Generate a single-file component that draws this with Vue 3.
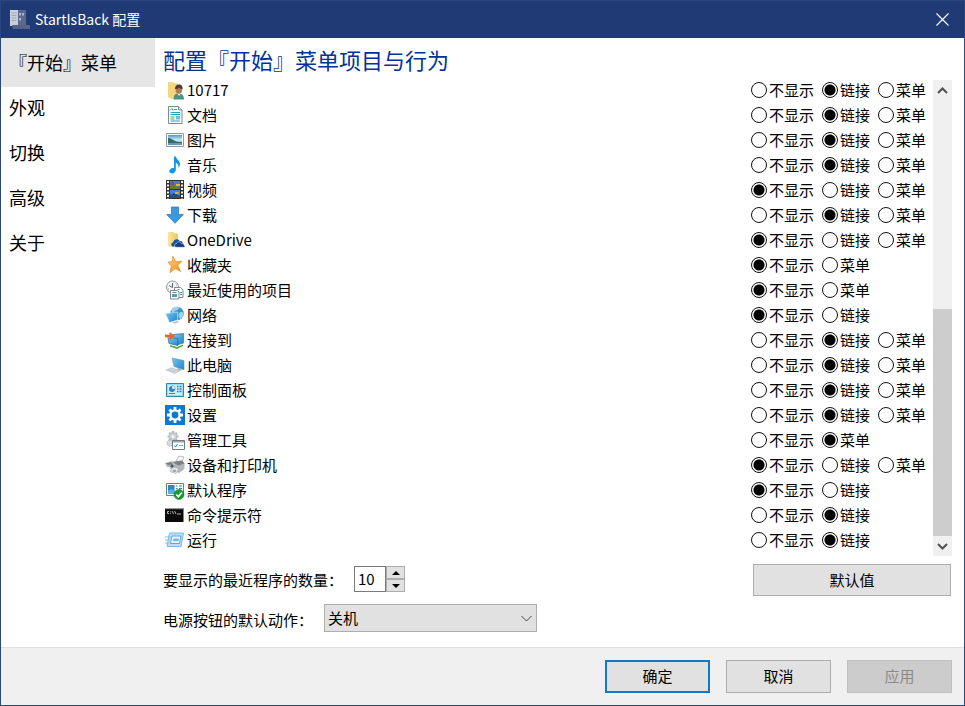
<template>
  <div class="window">
    <svg class="sprite" width="0" height="0" aria-hidden="true">
      <defs>
        <linearGradient id="g-folder" x1="0" y1="0" x2="1" y2="0">
          <stop offset="0" stop-color="#fbe69a" />
          <stop offset="1" stop-color="#edc860" />
        </linearGradient>
        <linearGradient id="g-screen" x1="0" y1="0" x2="1" y2="1">
          <stop offset="0" stop-color="#7cc6ef" />
          <stop offset="1" stop-color="#1c83cb" />
        </linearGradient>
        <linearGradient id="g-star" x1="0" y1="0" x2="1" y2="1">
          <stop offset="0" stop-color="#ffd27a" />
          <stop offset="1" stop-color="#ee8a1d" />
        </linearGradient>
        <linearGradient id="g-photo" x1="0" y1="0" x2="0" y2="1">
          <stop offset="0" stop-color="#4d9ad2" />
          <stop offset="0.5" stop-color="#d3ebf6" />
          <stop offset="1" stop-color="#3c7ca8" />
        </linearGradient>
      </defs>
      <symbol id="user" viewBox="0 0 20 20">
        <path d="M3 2h5l2 1.500h3V17l-6 2-4-2z" fill="url(#g-folder)" />
        <path d="M3 2l4 3v14l-4-2z" fill="#f3d680" />
        <path d="M8.500 19.500c0-4 1.500-6 5-6s5.500 2 5.500 6z" fill="#4b9480" />
        <path d="M12 13l2 3 2.500-3z" fill="#e8e4d8" />
        <ellipse cx="13.800" cy="9.800" rx="3.200" ry="4" fill="#b07a52" />
        <path d="M10 9c0-3 1.500-4.500 4-4.500S18 6 17.500 9.500C16 9 15 8.500 14.500 7.500 13 8.500 12 9 10 9z" fill="#4a3b32" />
      </symbol>
      <symbol id="doc" viewBox="0 0 20 20">
        <path d="M3.500 1.500h10l3.500 3.500v13.500h-13.500z" fill="#fff" stroke="#7d8a92" />
        <path d="M13.500 1.500v3.500h3.500" fill="#dfe6ea" stroke="#7d8a92" />
        <path d="M5 5.500l2-2 1 2M9 4.500h3M5.500 7.500h9.500M5.500 9.500h9.500M5.500 12h4M5.500 14h4M5.500 16h9.500" stroke="#2ba0ba" fill="none" />
        <path d="M11 11h4v3.500h-4z" fill="#6fbfd0" />
      </symbol>
      <symbol id="pic" viewBox="0 0 20 20">
        <path d="M1.500 3.500h17v13h-17z" fill="#fff" stroke="#8d9aa3" />
        <path d="M3 5h14v10H3z" fill="url(#g-photo)" />
        <path d="M3 8c3 0 5 2 8 3.500 2 .6 4 .6 6 .6V13H3z" fill="#356b62" />
        <path d="M3 13h14v2H3z" fill="#5b9cc4" />
      </symbol>
      <symbol id="music" viewBox="0 0 20 20">
        <path d="M9 1.500h1.800c.4 2.800 4.200 4 4.200 7.500 0 1.500-.6 2.800-1.500 3.800.3-2.500-.6-4.300-2.700-5.100V15c0 2-1.700 3.400-3.800 3.400-1.700 0-2.700-1-2.700-2.300 0-1.700 1.700-3.100 3.700-3.100.4 0 .7 0 1 .1z" fill="#1597e0" />
      </symbol>
      <symbol id="video" viewBox="0 0 20 20">
        <path d="M1 0h18v19H1z" fill="#35312f" />
        <path d="M5 1h10v8H5z" fill="#4c79c8" />
        <path d="M5 10h10v8H5z" fill="#4083d6" />
        <path d="M5 6l4-2 2 3 4-3v5H5z" fill="#687c2c" />
        <path d="M6 2h3v3H6z" fill="#b13c46" />
        <path d="M11 4h4v2h-4z" fill="#e8b832" />
        <path d="M5 15l4-2 6 3v2H5z" fill="#274f86" />
        <path d="M10 12h4v2h-4z" fill="#dcaa38" />
        <path d="M3 1v18M17 1v18" stroke="#f3f3f3" stroke-width="2" stroke-dasharray="2 1.500" />
      </symbol>
      <symbol id="down" viewBox="0 0 20 20">
        <path d="M6.500 2h7v7.500h4.800L10 18.300 1.700 9.500h4.800z" fill="#3c98e0" stroke="#2b7fc6" stroke-width=".8" />
      </symbol>
      <symbol id="onedrive" viewBox="0 0 20 20">
        <path d="M3 2h5l2 1.500h3V17H6l-3-1z" fill="url(#g-folder)" />
        <path d="M8 16.500c-2 0-2.500-3.500 0-4 .5-3.300 5-4.500 6.800-1.500 2.700-.4 3.200 2 2.900 2.700 2 .6 1.500 2.800 0 2.800z" fill="#1a56a0" />
        <path d="M11 17.300c-2-.4-2-3.200.3-3.500.9-2.500 4.300-2.700 5.200-.2 2.400-.2 2.700 1 2.600 1.600 1.500.7.900 2.100-.4 2.100z" fill="#123f82" stroke="#fff" stroke-width=".5" />
      </symbol>
      <symbol id="star" viewBox="0 0 20 20">
        <path d="M7.800 1.300l3.200 5.400 6-.5-4.200 4.100 2.700 6.200-5.200-3-5.300 4.200 1.300-6.500L3 7l4.500-.4z" fill="url(#g-star)" stroke="#dd8a2b" stroke-width=".7" />
      </symbol>
      <symbol id="recent" viewBox="0 0 20 20">
        <circle cx="7.500" cy="7" r="6" fill="#f3f5f6" stroke="#8e979d" />
        <path d="M7.500 3v4.500L4 5.500" stroke="#59656d" fill="none" />
        <path d="M3 9h1M7 11v1M11 5h1" stroke="#8e979d" />
        <path d="M9.500 7.500h6l2.500 2.500v7.500H9.500z" fill="#fff" stroke="#7f898f" />
        <path d="M5.500 10.500h7l1.500 1.500v7H5.500z" fill="#fff" stroke="#7f898f" />
        <path d="M7.500 12.500h4M12.500 9.500h2M15 12.500h2M15 14.500h2" stroke="#74828b" />
        <path d="M7 14h5v3H7z" fill="#4d9cc6" />
      </symbol>
      <symbol id="net" viewBox="0 0 20 20">
        <circle cx="12" cy="8.500" r="6.800" fill="#3e93c8" />
        <path d="M6 6c2-4 6-5 9-3.500-2 1-2 3-4.500 3-1 2-3 1.500-4.500.5zM14 8c2-1.500 3-1 4.500 0 0 3-1 4.500-3 6-2-1-2.500-4-1.500-6z" fill="#9fd2e8" />
        <path d="M.5 8.500l12-1.500v8l-8 2.500z" fill="url(#g-screen)" stroke="#d8f0fb" stroke-width=".6" />
        <path d="M7 17.500l6-1.500 1.500 1-5 1.800z" fill="#b2c4ce" />
      </symbol>
      <symbol id="connect" viewBox="0 0 20 20">
        <path d="M8 4.500l10.500-1v9.500l-7 2z" fill="url(#g-screen)" stroke="#35769f" stroke-width=".7" />
        <path d="M3 8l10 .3v7.200l-9-2z" fill="url(#g-screen)" stroke="#276a98" stroke-width=".7" />
        <path d="M5 15l7 2 6-2.500v1.500l-6 3-7-2.500z" fill="#4cad45" />
        <path d="M0 4.500l4.500.3V2L10 6l-5 4V7.800L0 7.300z" fill="#e5672d" />
      </symbol>
      <symbol id="pc" viewBox="0 0 20 20">
        <path d="M7 3l12 2.500v9.300L9 11.500z" fill="url(#g-screen)" stroke="#6b97b3" stroke-width=".6" />
        <path d="M12.500 13v2l4 .5v-1.500z" fill="#a4adb3" />
        <path d="M1 15l5-2.200 9 2.700-5 3z" fill="#d9dfe2" stroke="#adb7bd" stroke-width=".6" />
        <path d="M3.500 15l7 2M6 14l7 2" stroke="#a0abb2" stroke-width=".6" stroke-dasharray="1 .6" />
      </symbol>
      <symbol id="panel" viewBox="0 0 20 20">
        <path d="M1.500 3.500h17v13h-17z" fill="#9adcf5" stroke="#2b88b4" />
        <path d="M3 5h14v10H3z" fill="#cceffb" />
        <circle cx="7" cy="9" r="3" fill="#2e86c1" />
        <path d="M7 9V5.500A3.300 3.300 0 0 1 10.300 9z" fill="#f2f9fc" stroke="#3390c4" stroke-width=".5" />
        <path d="M12 6.500h1.500M14.500 6.500h2M12 9h1.500M14.500 9h2M12 11.500h1.500M14.500 11.500h2" stroke="#267cae" stroke-width="1.400" />
        <path d="M4 13.500h6" stroke="#2e86c1" />
      </symbol>
      <symbol id="gear" viewBox="0 0 20 20">
        <path d="M0 0h20v20H0z" fill="#0b79d0" />
        <path d="M10 2v16M2 10h16M4.400 4.400l11.200 11.200M15.600 4.400L4.400 15.600" stroke="#fff" stroke-width="2.800" />
        <circle cx="10" cy="10" r="5.800" fill="#fff" />
        <circle cx="10" cy="10" r="3.400" fill="#0b79d0" />
      </symbol>
      <symbol id="tools" viewBox="0 0 20 20">
        <path d="M8 1v11M2.500 6.500h11M4.200 2.700l7.700 7.700M11.900 2.700l-7.700 7.700" stroke="#b4babe" stroke-width="2.200" />
        <circle cx="8" cy="6.500" r="3.900" fill="#ced2d5" stroke="#a8afb3" stroke-width=".6" />
        <circle cx="8" cy="6.500" r="1.500" fill="#f5f6f7" />
        <circle cx="5" cy="13" r="3" fill="#d7dadc" stroke="#aab0b4" stroke-dasharray="1.500 .8" />
        <path d="M7.500 10.500h12v9h-12z" fill="#fff" stroke="#727b81" />
        <path d="M8 11h11v1.500H8z" fill="#9aa4aa" />
        <path d="M9.500 15.500l1 1.500 2-3" stroke="#278cc4" fill="none" />
        <path d="M14 15.500h1.500M16.500 15.500h1.500" stroke="#4b9bcd" />
      </symbol>
      <symbol id="printer" viewBox="0 0 20 20">
        <path d="M11 6l3-5 5 1-2 5z" fill="#f6f6f6" stroke="#a0a4a6" stroke-width=".7" />
        <path d="M7 7l10-1.500 2.500 3V14L14 18l-9-4z" fill="#b3b7b9" />
        <path d="M7 7l10-1.500 2.500 3-6 2z" fill="#7b8083" />
        <path d="M8 12l6 1.500-3 5-6-2z" fill="#e8edf0" stroke="#999ea1" stroke-width=".6" />
        <path d="M0 8l7-2 3 3.500-1 3.500-7-1z" fill="#b6babd" />
        <path d="M1 8.200l5-1 2 2-5 .8z" fill="#777c7f" />
        <circle cx="7" cy="11" r="1.600" fill="#4d5357" />
        <path d="M9 14.500l2.500.8-1.500 2-3-1z" fill="#69a8ca" />
      </symbol>
      <symbol id="defaults" viewBox="0 0 20 20">
        <path d="M1.500 3.500h17v12h-17z" fill="#fff" stroke="#6c7d88" />
        <path d="M3 5h6.500v9H3z" fill="#2688cc" />
        <path d="M3 11c2-2 4-2 6.500-1v4H3z" fill="#55b1e4" />
        <path d="M11 6h1.500M14 6h3M11 8.500h1.500M14 8.500h3" stroke="#2f7fb3" />
        <circle cx="14" cy="14.500" r="5" fill="#1c9a35" stroke="#137e28" stroke-width=".6" />
        <path d="M11.300 14.500l2 2.200 3.500-4.200" stroke="#fff" stroke-width="1.700" fill="none" />
      </symbol>
      <symbol id="cmd" viewBox="0 0 20 20">
        <path d="M0 3h18.500v14H0z" fill="#090909" />
        <path d="M0 3h18.500v1.200H0z" fill="#999" />
        <path d="M4 6.500H2.500v2H4M5.500 6.500v.8M5.500 8v.8M7 6l1.500 3M9.500 6l1.500 3M12 9h4" stroke="#ddd" stroke-width=".8" fill="none" />
      </symbol>
      <symbol id="run" viewBox="0 0 20 20">
        <path d="M4.500 3h14l-2.500 13.500H2z" fill="#b9e0f7" stroke="#7dbbe4" />
        <path d="M7 6h9l-1.500 7.500H5.500z" fill="#eaf7ff" stroke="#5fa6da" />
        <path d="M8.500 8.500h5.500l-.6 2.800H8z" fill="#74b9e8" />
        <path d="M0 7h5M0 10h4.500M0 13h4" stroke="#83bfe8" stroke-width="1.200" />
      </symbol>
    </svg>

    <header class="titlebar">
      <svg class="app-icon" viewBox="0 0 20 20" aria-hidden="true">
        <path d="M7 0h9v16H7z" fill="#59698f" />
        <path d="M0 0h8v16H0z" fill="#c9ced9" />
        <path d="M1.500 3h5M1.500 5.500h5M1.500 8h5M1.500 10.500h5" stroke="#a0a8ba" />
        <path d="M10 3v2.500M13 3v2.500M10 8v2.500" stroke="#a9b4cb" stroke-width="2" />
        <path d="M2 15h18v4H3z" fill="#566587" />
      </svg>
      <span class="caption">StartIsBack 配置</span>
      <button class="close" type="button" aria-label="关闭">
        <svg width="13" height="13" viewBox="0 0 13 13"><path d="M.5.500l12 12M12.500.500l-12 12" stroke="#fff" stroke-width="1.200" /></svg>
      </button>
    </header>

    <div class="body">
      <nav class="sidebar">
        <button
          v-for="(tab, i) in tabs"
          :key="tab"
          type="button"
          :class="['tab', { active: i === current }]"
          @click="current = i"
        >{{ tab }}</button>
      </nav>

      <main class="page">
        <h1>配置『开始』菜单项目与行为</h1>
        <div class="list">
          <div class="rows">
            <div v-for="item in items" :key="item.icon" class="row" role="radiogroup" :aria-label="item.name">
              <svg class="icon" aria-hidden="true"><use :href="'#' + item.icon" /></svg>
              <span class="name">{{ item.name }}</span>
              <div class="choices">
                <label v-for="opt in item.options" :key="opt">
                  <input v-model="item.value" type="radio" :name="item.icon" :value="opt">{{ opt }}
                </label>
              </div>
            </div>
          </div>
          <div class="scrollbar">
            <button type="button" aria-label="向上">
              <svg width="11" height="7" viewBox="0 0 11 7"><path d="M1 6l4.500-4.500L10 6" /></svg>
            </button>
            <div class="track"><div class="thumb"></div></div>
            <button type="button" aria-label="向下">
              <svg width="11" height="7" viewBox="0 0 11 7"><path d="M1 1l4.500 4.500L10 1" /></svg>
            </button>
          </div>
        </div>

        <div class="field count">
          <label for="recent-count">要显示的最近程序的数量：</label>
          <div class="spin">
            <input id="recent-count" v-model.number="count" type="number">
            <div class="spin-buttons">
              <button type="button" aria-label="增加" @click="count++">
                <svg width="8" height="4" viewBox="0 0 8 4"><path d="M0 4l4-4 4 4z" /></svg>
              </button>
              <button type="button" aria-label="减少" @click="count--">
                <svg width="8" height="4" viewBox="0 0 8 4"><path d="M0 0l4 4 4-4z" /></svg>
              </button>
            </div>
          </div>
          <button class="btn reset" type="button">默认值</button>
        </div>
        <div class="field power">
          <label for="power-action">电源按钮的默认动作：</label>
          <div class="select">
            <select id="power-action" v-model="power">
              <option>关机</option>
              <option>重启</option>
              <option>睡眠</option>
            </select>
            <svg width="11" height="7" viewBox="0 0 11 7"><path d="M.5 1l5 5 5-5" /></svg>
          </div>
        </div>
      </main>
    </div>

    <footer class="footer">
      <button class="btn primary" type="button">确定</button>
      <button class="btn" type="button">取消</button>
      <button class="btn" type="button" disabled>应用</button>
    </footer>
  </div>
</template>

<script setup>
import { ref, reactive } from 'vue';

const tabs = ['『开始』菜单', '外观', '切换', '高级', '关于'];
const current = ref(0);
const count = ref(10);
const power = ref('关机');

const HIDE = '不显示';
const LINK = '链接';
const MENU = '菜单';
const all = [HIDE, LINK, MENU];

const items = reactive([
  { name: '10717', icon: 'user', options: all, value: LINK },
  { name: '文档', icon: 'doc', options: all, value: LINK },
  { name: '图片', icon: 'pic', options: all, value: LINK },
  { name: '音乐', icon: 'music', options: all, value: LINK },
  { name: '视频', icon: 'video', options: all, value: HIDE },
  { name: '下载', icon: 'down', options: all, value: LINK },
  { name: 'OneDrive', icon: 'onedrive', options: all, value: HIDE },
  { name: '收藏夹', icon: 'star', options: [HIDE, MENU], value: HIDE },
  { name: '最近使用的项目', icon: 'recent', options: [HIDE, MENU], value: HIDE },
  { name: '网络', icon: 'net', options: [HIDE, LINK], value: HIDE },
  { name: '连接到', icon: 'connect', options: all, value: LINK },
  { name: '此电脑', icon: 'pc', options: all, value: LINK },
  { name: '控制面板', icon: 'panel', options: all, value: LINK },
  { name: '设置', icon: 'gear', options: all, value: LINK },
  { name: '管理工具', icon: 'tools', options: [HIDE, MENU], value: MENU },
  { name: '设备和打印机', icon: 'printer', options: all, value: HIDE },
  { name: '默认程序', icon: 'defaults', options: [HIDE, LINK], value: HIDE },
  { name: '命令提示符', icon: 'cmd', options: [HIDE, LINK], value: LINK },
  { name: '运行', icon: 'run', options: [HIDE, LINK], value: LINK }
]);
</script>

<style scoped>
* {
  box-sizing: border-box;
}

.window {
  display: flex;
  flex-direction: column;
  min-height: 100vh;
  border: 1px solid #2c467f;
  border-top: 0;
  background: #fff;
  color: #000;
  font-family: "Noto Sans CJK SC", sans-serif;
  font-size: 15px;
  line-height: 25px;
}

.sprite {
  position: absolute;
}

button,
input,
select {
  margin: 0;
  padding: 0;
  border: 0;
  font: inherit;
  color: inherit;
  background: none;
}

.titlebar {
  display: flex;
  align-items: center;
  height: 38px;
  padding: 0 15px 0 9px;
  border-top: 1px solid #2c467f;
  background: #203a76;
  color: #fff;
}

.app-icon {
  width: 20px;
  height: 20px;
}

.caption {
  flex: 1;
  padding-left: 5px;
  font-size: 14px;
}

.close {
  display: flex;
}

.body {
  display: flex;
  flex: 1;
}

.sidebar {
  display: flex;
  flex-direction: column;
  width: 154px;
}

.tab {
  height: 45px;
  padding: 0 0 4px 8px;
  font-size: 18px;
  text-align: left;
}

.tab.active {
  height: 49px;
  padding-bottom: 0;
  background: #e6e6e6;
}

.page {
  flex: 1;
  padding: 0 12px 15px 8px;
}

h1 {
  margin: 0;
  padding-top: 3px;
  font-size: 22px;
  font-weight: 400;
  line-height: 36px;
  color: #003399;
}

.list {
  display: flex;
  gap: 7px;
}

.rows {
  flex: 1;
}

.row {
  display: flex;
  align-items: center;
  height: 25px;
  padding-left: 2px;
}

.icon {
  width: 20px;
  height: 20px;
  margin-right: 2px;
}

.name {
  flex: 1;
}

.choices {
  display: flex;
  gap: 8px;
  width: 175px;
}

.choices label {
  display: flex;
  align-items: center;
  gap: 2px;
}

.choices input {
  appearance: none;
  width: 16px;
  height: 16px;
  border: 1px solid #111;
  border-radius: 50%;
  background: #fff;
}

.choices input:checked {
  background: radial-gradient(circle, #000 5px, #fff 6px);
}

.scrollbar {
  display: flex;
  flex-direction: column;
  width: 19px;
  margin: 3px 0 -4px;
  background: #f0f0f0;
}

.scrollbar button {
  display: flex;
  align-items: center;
  justify-content: center;
  height: 20px;
}

.scrollbar path {
  fill: none;
  stroke: #505050;
  stroke-width: 2;
}

.track {
  display: flex;
  flex: 1;
  align-items: flex-end;
}

.thumb {
  width: 100%;
  height: 52%;
  background: #cdcdcd;
}

.field {
  display: flex;
  align-items: center;
}

.field > label {
  margin-right: 11px;
}

.count {
  margin-top: 12px;
}

.count > label,
.spin {
  margin-bottom: 2px;
}

.power {
  align-items: flex-end;
  margin-top: 8px;
}

.spin {
  display: flex;
  height: 26px;
}

.spin input {
  width: 32px;
  padding: 0 0 2px 3px;
  border: 1px solid #7a7a7a;
  background: #fff;
  appearance: textfield;
}

.spin input::-webkit-inner-spin-button {
  appearance: none;
}

.spin-buttons {
  display: flex;
  flex-direction: column;
  width: 19px;
}

.spin-buttons button {
  display: flex;
  flex: 1;
  align-items: center;
  justify-content: center;
  border: 1px solid #adadad;
  background: #e1e1e1;
}

.btn {
  width: 105px;
  height: 33px;
  padding-bottom: 2px;
  border: 1px solid #adadad;
  background: #e1e1e1;
}

.btn.reset {
  width: 198px;
  height: 32px;
  margin-left: auto;
  margin-right: 1px;
}

.btn.primary {
  border: 2px solid #0f78c8;
}

.btn:disabled {
  border-color: #bfbfbf;
  background: #cccccc;
  color: #8a8a8a;
}

.select {
  position: relative;
  width: 213px;
}

.select select {
  display: block;
  width: 100%;
  height: 28px;
  padding: 0 0 2px 3px;
  border: 1px solid #adadad;
  border-radius: 0;
  background: #e1e1e1;
  appearance: none;
}

.select svg {
  position: absolute;
  top: 11px;
  right: 5px;
  pointer-events: none;
}

.select path {
  fill: none;
  stroke: #444;
}

.footer {
  display: flex;
  justify-content: flex-end;
  gap: 16px;
  padding: 12px;
  border-top: 1px solid #dfdfdf;
  background: #f0f0f0;
}
</style>

<style>
body {
  margin: 0;
}
</style>
